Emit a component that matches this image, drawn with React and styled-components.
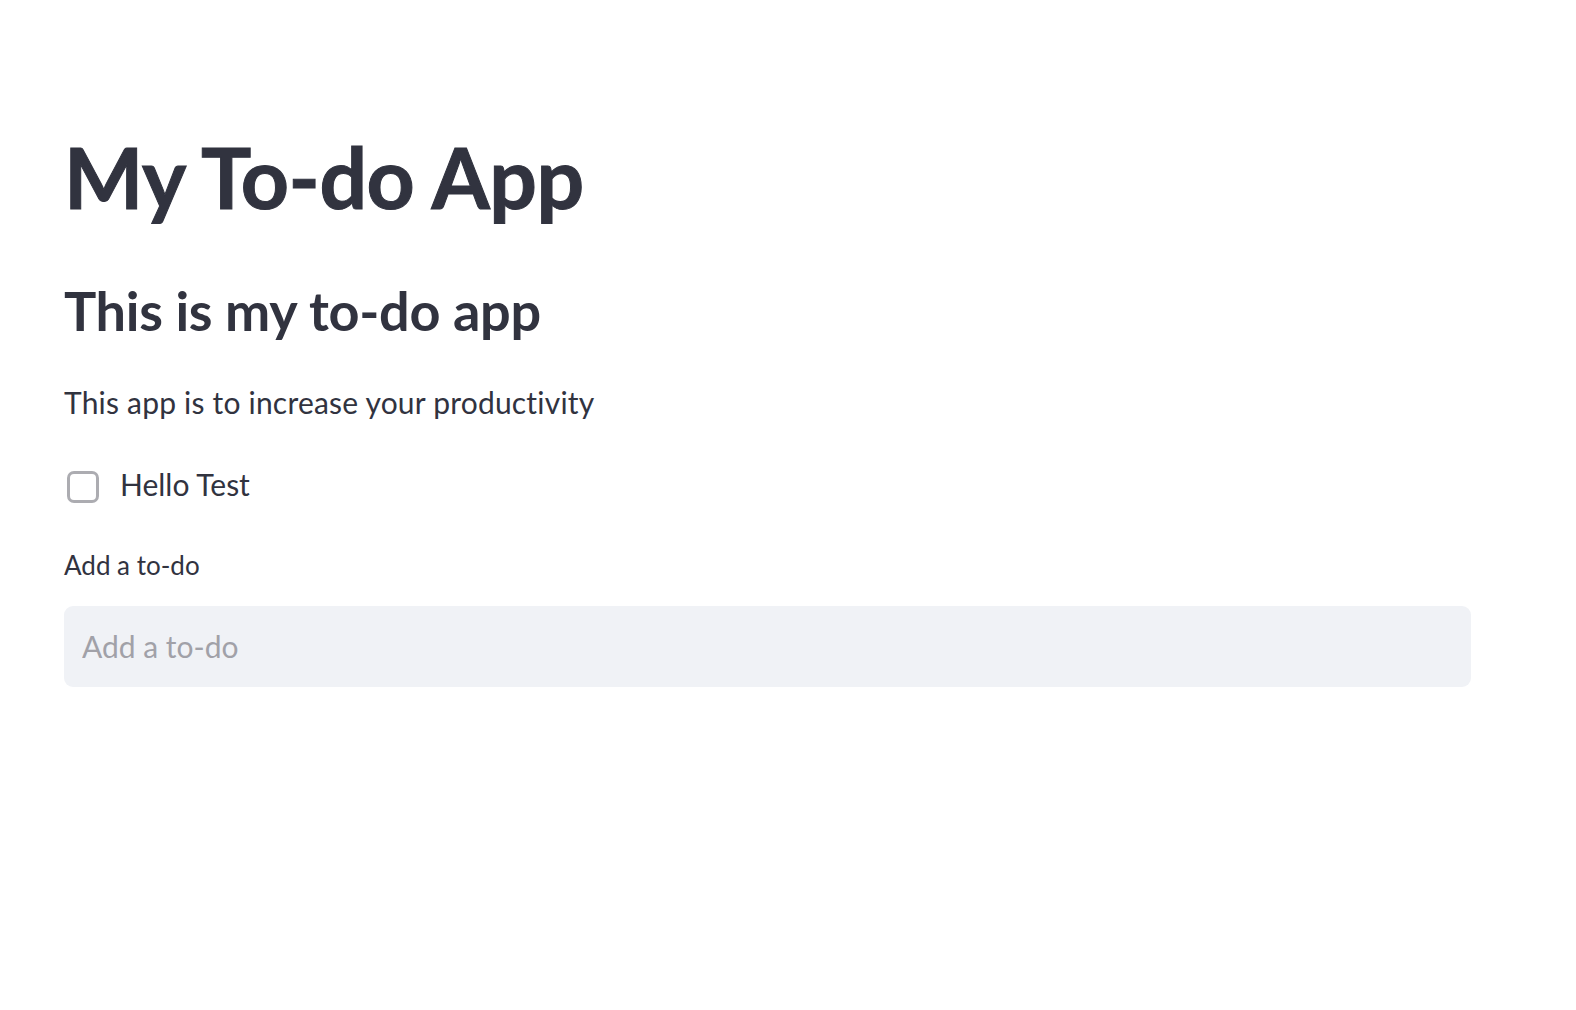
import * as React from 'react';
import styled, { createGlobalStyle } from 'styled-components';

const GlobalStyle = createGlobalStyle`
    html, body {
        margin: 0;
        padding: 0;
        background: #ffffff;
    }
    body {
        font-family: Lato, "Noto Sans", sans-serif;
        color: #31333f;
    }
`

const Main = styled.main`
    display: flex;
    flex-direction: column;
    width: 1407px;
    padding: 127px 0 0 64px;
`
const Title = styled.h1`
    margin: 0;
    font-size: 84px;
    font-weight: 700;
    line-height: 1.2;
    letter-spacing: -0.5px;
    -webkit-text-stroke: 1px #31333f;
`
const SubTitle = styled.h2`
    margin: 51px 0 0;
    font-size: 54px;
    font-weight: 700;
    line-height: 1.2;
    letter-spacing: -0.3px;
`
const Text = styled.p`
    margin: 40px 0 0;
    font-size: 30px;
    line-height: 1.2;
    letter-spacing: 0.2px;
`
const CheckRow = styled.label`
    display: flex;
    align-items: center;
    gap: 21px;
    margin-top: 46px;
    font-size: 30px;
    line-height: 1.2;
    cursor: pointer;
`
const Box = styled.span`
    box-sizing: border-box;
    width: 32px;
    height: 32px;
    margin-left: 3px;
    margin-top: 5px;
    border: 3px solid #acacb1;
    border-radius: 7px;
    background: ${props => props.checked ? '#ff4b4b' : '#ffffff'};
`
const FieldLabel = styled.div`
    margin-top: 47px;
    font-size: 26px;
    line-height: 1.2;
`
const Input = styled.input`
    box-sizing: border-box;
    width: 100%;
    height: 81px;
    margin-top: 25px;
    padding: 0 18px;
    border: none;
    border-radius: 9px;
    background: #f0f2f6;
    font-family: Lato, "Noto Sans", sans-serif;
    font-size: 30px;
    color: #31333f;
    outline: none;
    &::placeholder {
        color: #a1a1a8;
    }
`

export default function App(){
    const [done, setDone] = React.useState(false);
    const [todo, setTodo] = React.useState('');
    return(
        <>
            <GlobalStyle />
            <Main>
                <Title>My To-do App</Title>
                <SubTitle>This is my to-do app</SubTitle>
                <Text>This app is to increase your productivity</Text>
                <CheckRow onClick={() => setDone(!done)}>
                    <Box checked={done} />
                    Hello Test
                </CheckRow>
                <FieldLabel>Add a to-do</FieldLabel>
                <Input placeholder="Add a to-do" value={todo} onChange={e => setTodo(e.target.value)} />
            </Main>
        </>
    )
}
